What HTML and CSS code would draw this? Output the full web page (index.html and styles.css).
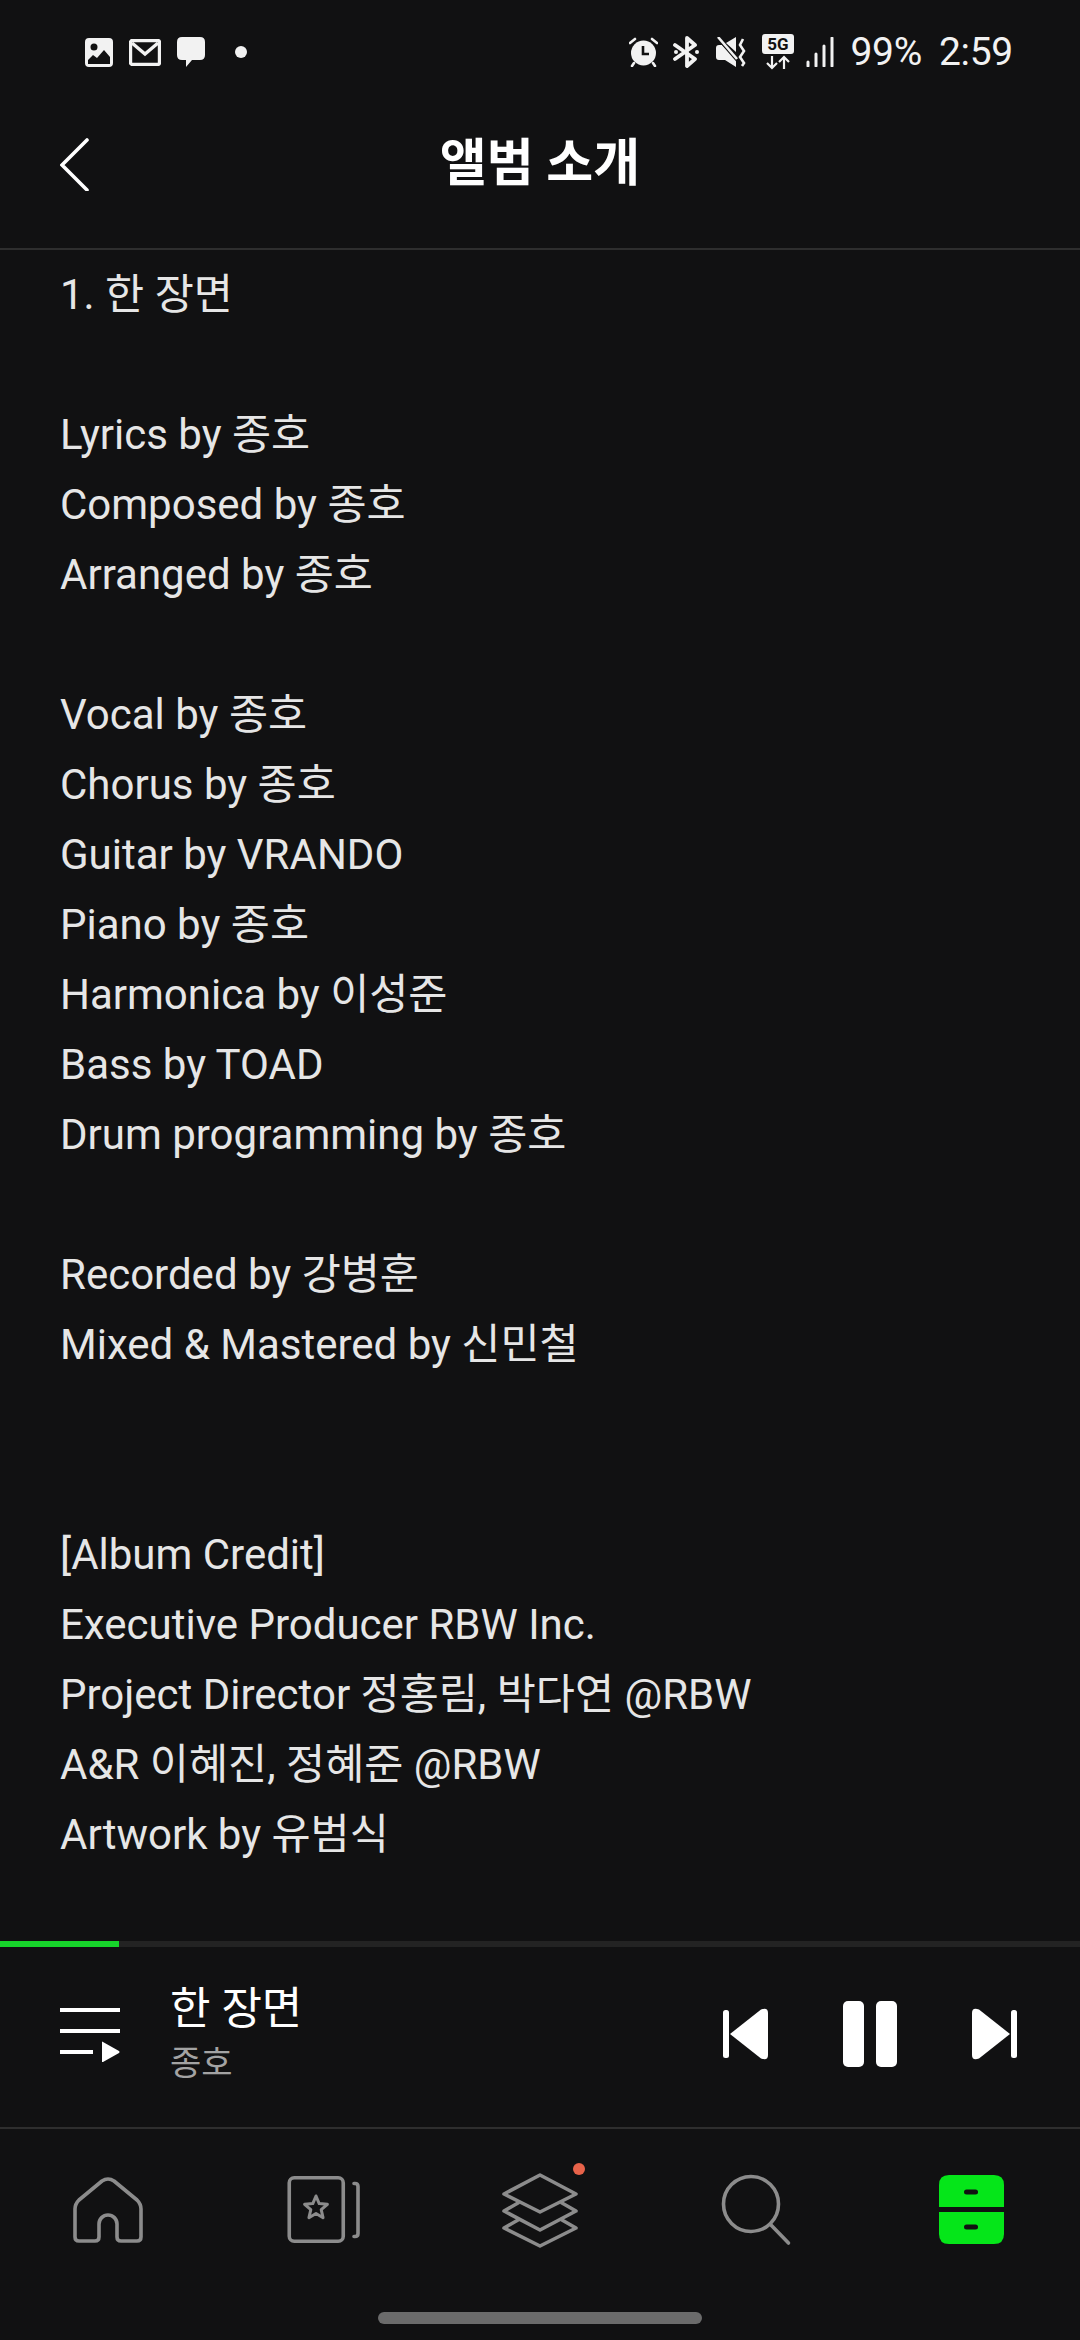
FILE: index.html
```html
<!DOCTYPE html>
<html lang="ko">
	<head>
		<meta charset="utf-8">
		<title>앨범 소개</title>
		<link rel="stylesheet" href="styles.css">
	</head>
	<body>
		<div class="page">
			<div class="status">
				<div class="status-left">
					<svg class="st-image" width="28" height="29" viewBox="0 0 28 29">
						<path fill-rule="evenodd" fill="#f2f2f2" d="M4 0H24Q28 0 28 4V25Q28 29 24 29H4Q0 29 0 25V4Q0 0 4 0ZM3 26H25V19L19 12L12 20L8 17L3 22ZM9 5.5A3.5 3.5 0 1 0 9 12.5A3.5 3.5 0 1 0 9 5.5Z"/>
					</svg>
					<svg class="st-mail" width="32" height="27" viewBox="0 0 32 27">
						<rect x="1.5" y="1.5" width="29" height="24" rx="2" fill="none" stroke="#f2f2f2" stroke-width="3.4"/>
						<path d="M3 4L16 15L29 4" fill="none" stroke="#f2f2f2" stroke-width="3.4"/>
					</svg>
					<svg class="st-chat" width="28" height="30" viewBox="0 0 28 30">
						<path fill="#f2f2f2" d="M5 0H23Q28 0 28 5V18Q28 23 23 23H15L9 30V23H5Q0 23 0 18V5Q0 0 5 0Z"/>
					</svg>
					<span class="st-dot"></span>
				</div>
				<div class="status-right">
					<svg class="st-alarm" width="29" height="30" viewBox="0 0 29 30">
						<circle cx="14.5" cy="16" r="12.5" fill="#f2f2f2"/>
						<path d="M1 6L6 2M28 6L23 2M5 26L3 29M24 26L26 29" stroke="#f2f2f2" stroke-width="2.6" stroke-linecap="round"/>
						<path d="M14 9V17H20" fill="none" stroke="#111" stroke-width="2.6"/>
					</svg>
					<svg class="st-bt" width="27" height="32" viewBox="0 0 27 32">
						<path d="M2 9L22 23L14 30V2L22 9L2 23" fill="none" stroke="#f2f2f2" stroke-width="3.8" stroke-linejoin="round" stroke-linecap="round"/>
						<circle cx="3" cy="16" r="2" fill="#f2f2f2"/>
						<circle cx="24" cy="16" r="2" fill="#f2f2f2"/>
					</svg>
					<svg class="st-mute" width="30" height="30" viewBox="0 0 30 30">
						<path fill="#f2f2f2" d="M0 11Q0 8 3 8H6L20 23V30L9 23H3Q0 23 0 20ZM10 6L20 0V15Z"/>
						<path d="M3 3L22 25" stroke="#111" stroke-width="2"/>
						<path d="M2 0L21 22" stroke="#f2f2f2" stroke-width="2.6"/>
						<path d="M27 2L24 8L28 14L24 20L28 26L26 29" fill="none" stroke="#f2f2f2" stroke-width="2.6"/>
					</svg>
					<svg class="st-5g" width="32" height="36" viewBox="0 0 32 36">
						<rect x="0" y="0" width="32" height="20" rx="3" fill="#f2f2f2"/>
						<text class="st-5g-text" x="16" y="16" text-anchor="middle">5G</text>
						<path d="M10 22V34M5 29L10 34L15 29M22 35V23M17 28L22 23L27 28" fill="none" stroke="#f2f2f2" stroke-width="2.2"/>
					</svg>
					<svg class="st-signal" width="28" height="30" viewBox="0 0 28 30">
						<path d="M2 25V29M10 17V29M18 9V29M26 1V29" stroke="#f2f2f2" stroke-width="3" stroke-linecap="round"/>
					</svg>
					<span class="st-battery">99%</span>
					<span class="st-time">2:59</span>
				</div>
			</div>

			<div class="header">
				<svg class="back" width="30" height="54" viewBox="1 -1 30 54">
					<path d="M28 2L3 27L28 52" fill="none" stroke="#fff" stroke-width="3.6" stroke-linecap="round"/>
				</svg>
				<div class="title">앨범 소개</div>
			</div>

			<div class="content">
				<div class="line">1. <span class="ko">한 장면</span></div>
				<div class="line"></div>
				<div class="line">Lyrics by <span class="ko">종호</span></div>
				<div class="line">Composed by <span class="ko">종호</span></div>
				<div class="line">Arranged by <span class="ko">종호</span></div>
				<div class="line"></div>
				<div class="line">Vocal by <span class="ko">종호</span></div>
				<div class="line">Chorus by <span class="ko">종호</span></div>
				<div class="line">Guitar by VRANDO</div>
				<div class="line">Piano by <span class="ko">종호</span></div>
				<div class="line">Harmonica by <span class="ko">이성준</span></div>
				<div class="line">Bass by TOAD</div>
				<div class="line">Drum programming by <span class="ko">종호</span></div>
				<div class="line"></div>
				<div class="line">Recorded by <span class="ko">강병훈</span></div>
				<div class="line">Mixed &amp; Mastered by <span class="ko">신민철</span></div>
				<div class="line"></div>
				<div class="line"></div>
				<div class="line">[Album Credit]</div>
				<div class="line">Executive Producer RBW Inc.</div>
				<div class="line">Project Director <span class="ko">정홍림, 박다연</span> @RBW</div>
				<div class="line">A&amp;R <span class="ko">이혜진, 정혜준</span> @RBW</div>
				<div class="line">Artwork by <span class="ko">유범식</span></div>
			</div>

			<div class="progress"><div class="progress-fill"></div></div>

			<div class="player">
				<svg class="queue" width="60" height="54" viewBox="0 0 60 54">
					<path d="M0 2H60M0 23H60M0 44H33" stroke="#fff" stroke-width="4"/>
					<path d="M42 34Q42 33 43 34L59 43Q60 44 59 45L43 54Q42 55 42 54Z" fill="#fff"/>
				</svg>
				<div class="track">
					<div class="track-name">한 장면</div>
					<div class="track-artist">종호</div>
				</div>
				<div class="controls">
					<svg width="45" height="52" viewBox="0 0 45 52">
						<rect x="0" y="2" width="6" height="48" rx="2.5" fill="#fff"/>
						<path d="M7 26L38 1.5Q45 -1 45 5V47Q45 53 38 50.500Z" fill="#fff"/>
					</svg>
					<svg width="54" height="66" viewBox="0 0 54 66">
						<rect x="0" y="0" width="21" height="66" rx="5" fill="#fff"/>
						<rect x="33" y="0" width="21" height="66" rx="5" fill="#fff"/>
					</svg>
					<svg width="45" height="52" viewBox="0 0 45 52">
						<rect x="39" y="2" width="6" height="48" rx="2.5" fill="#fff"/>
						<path d="M38 26L7 1.5Q0 -1 0 5V47Q0 53 7 50.500Z" fill="#fff"/>
					</svg>
				</div>
			</div>

			<div class="nav">
				<div class="nav-item">
					<svg width="80" height="80" viewBox="0 0 80 80">
						<path class="nav-line" d="M40 9Q37 9 34 11L11 30Q7 34 7 39V67Q7 71 11 71H27Q31 71 31 67V54A9 9 0 0 1 49 54V67Q49 71 53 71H69Q73 71 73 67V39Q73 34 69 30L46 11Q43 9 40 9Z"/>
					</svg>
				</div>
				<div class="nav-item">
					<svg width="80" height="80" viewBox="0 0 80 80">
						<rect class="nav-line" x="5.250" y="7.750" width="54" height="63.500" rx="5"/>
						<path class="nav-line" d="M70 13.500H71Q74 13.500 74 16.500V63.500Q74 66.500 71 66.500H70"/>
						<path class="nav-star" d="M32 26L35.200 33.550L43.400 34.300L37.200 39.700L39.050 47.700L32 43.500L24.950 47.700L26.800 39.700L20.600 34.300L28.800 33.550Z"/>
					</svg>
				</div>
				<div class="nav-item">
					<svg width="80" height="80" viewBox="0 0 80 80">
						<path class="nav-line" d="M40 5L76 24L40 42L4 24Z"/>
						<path class="nav-line" d="M62 33L76 41L40 60L4 41L18 33"/>
						<path class="nav-line" d="M62 50L76 58L40 76L4 58L18 50"/>
					</svg>
					<span class="nav-dot"></span>
				</div>
				<div class="nav-item">
					<svg width="80" height="80" viewBox="0 0 80 80">
						<circle class="nav-line" cx="35" cy="34" r="27.500"/>
						<path class="nav-line" d="M55 55L72.500 73"/>
					</svg>
				</div>
				<div class="nav-item">
					<svg width="80" height="80" viewBox="0 0 80 80">
						<path fill="#05e619" d="M17 5H62Q72 5 72 15V37H7V15Q7 5 17 5Z"/>
						<path fill="#05e619" d="M7 42H72V64Q72 74 62 74H17Q7 74 7 64Z"/>
						<rect x="32" y="19.500" width="14" height="5" rx="2.500" fill="#111"/>
						<rect x="32" y="54.500" width="14" height="5" rx="2.500" fill="#111"/>
					</svg>
				</div>
			</div>
			<div class="home-bar"></div>
		</div>
	</body>
</html>
```
FILE: styles.css
```css
* {
	box-sizing: border-box;
}

html, body {
	margin: 0;
	padding: 0;
	background: #111112;
}

body {
	font-family: Roboto, "Noto Sans CJK KR", sans-serif;
}

.page {
	width: 1080px;
	height: 2340px;
	display: flex;
	flex-direction: column;
	overflow: hidden;
	padding-bottom: 16px;
	background: #111112;
}

/* status bar */
.status {
	height: 104px;
	flex: none;
	display: flex;
	align-items: center;
	justify-content: space-between;
	padding: 0 67px 0 85px;
	color: #f2f2f2;
}

.status-left, .status-right {
	display: flex;
	align-items: center;
}

.st-mail {
	margin-left: 16px;
}

.st-chat {
	margin-left: 16px;
}

.st-dot {
	width: 12px;
	height: 12px;
	border-radius: 50%;
	background: #f2f2f2;
	margin-left: 30px;
}

.st-bt {
	margin-left: 15px;
}

.st-mute {
	margin-left: 16px;
}

.st-5g {
	margin-left: 16px;
}

.st-5g-text {
	font-family: Roboto, sans-serif;
	font-size: 17px;
	font-weight: 700;
	fill: #111;
}

.st-signal {
	margin-left: 12px;
}

.st-battery, .st-time {
	font-size: 39px;
	line-height: 44px;
	letter-spacing: -0.3px;
}

.st-battery {
	margin-left: 16px;
}

.st-time {
	margin-left: 17px;
}

/* header */
.header {
	height: 146px;
	flex: none;
	display: grid;
	grid-template-columns: 1fr auto 1fr;
	align-items: center;
	padding: 0 60px 24px;
	border-bottom: 2px solid #2e2e2e;
}

.title {
	font-size: 51px;
	font-weight: 700;
	color: #fff;
	line-height: 60px;
}

/* album text */
.content {
	flex: 1;
	padding: 10px 60px 0;
	overflow: hidden;
	font-size: 42px;
	color: #e6e6e6;
}

.line {
	height: 70px;
	line-height: 70px;
	white-space: nowrap;
}

.ko {
	font-size: 42.5px;
	line-height: 1;
}

/* mini player */
.progress {
	height: 6px;
	flex: none;
	background: #232323;
}

.progress-fill {
	width: 119px;
	height: 100%;
	background: #17d52b;
}

.player {
	height: 182px;
	flex: none;
	display: flex;
	align-items: center;
	padding: 0 63px 6px 60px;
	border-bottom: 2px solid #2e2e2e;
}

.queue {
	margin-top: 2px;
}

.track {
	margin-left: 50px;
}

.track-name {
	font-size: 44px;
	line-height: 58px;
	color: #fff;
}

.track-artist {
	font-size: 34px;
	line-height: 50px;
	color: #a3a3a3;
}

.controls {
	margin-left: auto;
	display: flex;
	align-items: center;
	gap: 75px;
}

/* bottom nav */
.nav {
	flex: none;
	display: grid;
	grid-template-columns: repeat(5, 216px);
	padding-top: 41px;
}

.nav-item {
	position: relative;
	display: flex;
	justify-content: center;
	height: 80px;
}

.nav-line {
	fill: none;
	stroke: #8c8c8c;
	stroke-width: 3.6;
	stroke-linecap: round;
	stroke-linejoin: round;
}

.nav-star {
	fill: none;
	stroke: #8c8c8c;
	stroke-width: 3;
	stroke-linejoin: round;
}

.nav-dot {
	position: absolute;
	left: 141px;
	top: -7px;
	width: 12px;
	height: 12px;
	border-radius: 50%;
	background: #e8634a;
}

.home-bar {
	width: 324px;
	height: 12px;
	flex: none;
	margin: 62px auto 0;
	border-radius: 6px;
	background: #6b6b6b;
}
```
